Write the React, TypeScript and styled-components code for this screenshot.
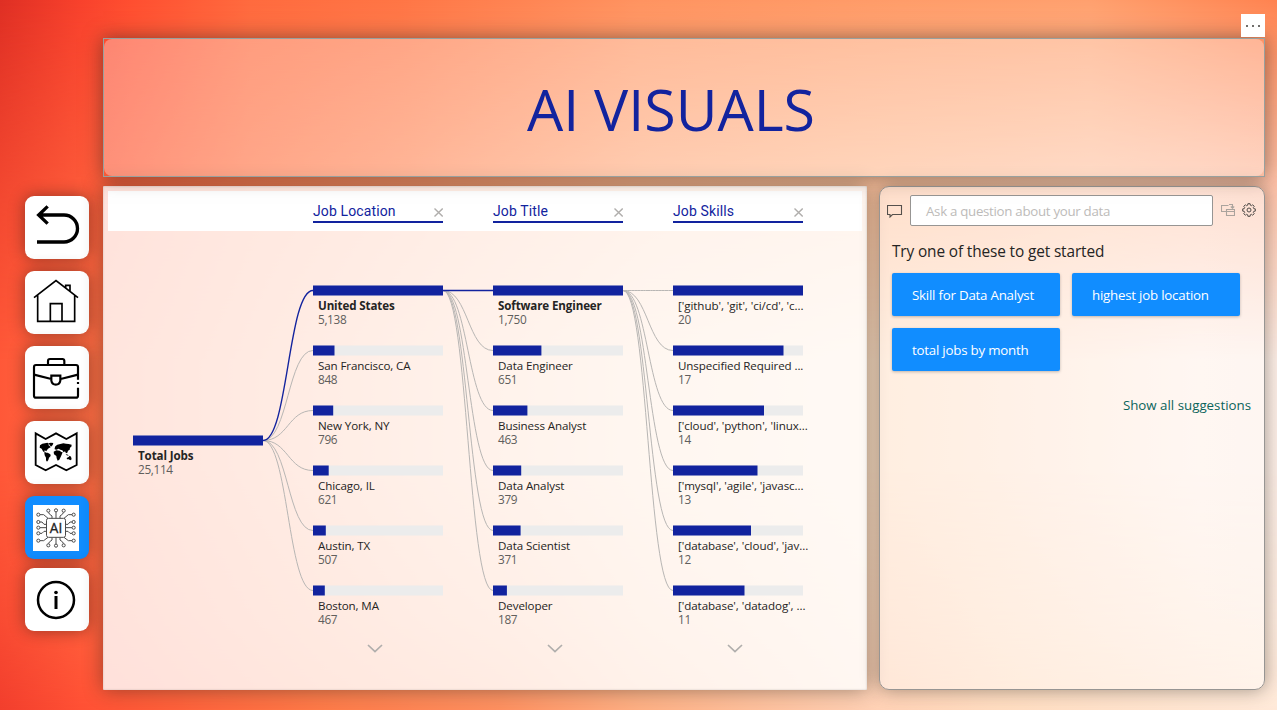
import React from "react";
import styled, { createGlobalStyle, css } from "styled-components";

const NAVY = "#12239e";
const UI = '"Open Sans", "Noto Sans", sans-serif';

const Global = createGlobalStyle`
  *, *::before, *::after { box-sizing: border-box; }
  body { margin: 0; font-family: ${UI}; color: #252423; }
  p, h1, h2 { margin: 0; font-weight: 400; }
  button { font: inherit; border: 0; padding: 0; cursor: pointer; }
  svg { display: block; flex-shrink: 0; }
`;

/* ---------- page ---------- */

const Page = styled.div`
  position: relative;
  isolation: isolate;
  display: flex;
  width: 1277px;
  height: 710px;
  overflow: hidden;
  background: linear-gradient(90deg, #ff5838 0, #ff6f45 100px, #ff9266 280px, #ffb28a 450px, #ffd0af 650px, #ffdfc4 860px, #ffe5d2 1000px, #fff0e8 1200px, #fdeee6 1277px);

  &::before, &::after {
    content: "";
    position: absolute;
    inset: 0;
    z-index: -1;
  }
  &::before {
    background: linear-gradient(90deg, #df2f24 0, #f8412c 80px, #ff4e30 130px, #ff6a3e 250px, #ff7545 400px, #ff9360 640px, #ff9c69 900px, #ffa06e 1090px, #ff8350 1277px);
    mask-image: linear-gradient(#000 0, rgba(0, 0, 0, 0.4) 190px, transparent 360px);
  }
  &::after {
    background: linear-gradient(90deg, #f23e2d 0, #ff5034 80px, #ff5c38 150px, #ff7a48 320px, #ff9060 500px, #ffb084 640px, #ffd0b4 870px, #ffdcc0 1000px, #ffe9d8 1277px);
    mask-image: linear-gradient(transparent 470px, rgba(0, 0, 0, 0.5) 620px, #000 710px);
  }
`;

const Sidebar = styled.nav`
  display: flex;
  flex-direction: column;
  gap: 12px;
  width: 103px;
  padding: 196px 0 0 25px;
`;

const NavButton = styled.button<{ $active?: boolean }>`
  display: flex;
  justify-content: center;
  align-items: center;
  width: 64px;
  height: 63px;
  border-radius: 9px;
  background: #fff;
  box-shadow: 0 0 16px rgba(30, 20, 15, 0.45);
  ${(p) =>
    p.$active &&
    css`
      justify-content: flex-start;
      padding-left: 8px;
      background: #118dff;
      margin-bottom: -3px;
    `}
`;

const Main = styled.main`
  display: flex;
  flex-direction: column;
  gap: 9px;
  width: 1162px;
  padding-top: 38px;
`;

const Banner = styled.header`
  position: relative;
  display: grid;
  place-items: center;
  height: 139px;
  padding-right: 26px;
  border: 1px solid #98a09e;
  box-shadow: 0 0 18px rgba(30, 30, 25, 0.5);
  &::before {
    content: "";
    position: absolute;
    inset: 0;
    border-radius: 8px;
    background: rgba(255, 255, 255, 0.32);
  }
`;

const Title = styled.h1`
  position: relative;
  padding-top: 2px;
  font-size: 57.3px;
  line-height: 78px;
  color: ${NAVY};
  white-space: nowrap;
`;

const MoreButton = styled.button`
  position: absolute;
  top: 14px;
  left: 1241px;
  display: flex;
  justify-content: center;
  align-items: center;
  gap: 4px;
  width: 24px;
  height: 23px;
  background: #fff;
`;

const Dot = styled.i`
  width: 2px;
  height: 2px;
  background: #706e6b;
`;

const Panels = styled.div`
  display: flex;
  gap: 12px;
  height: 504px;
`;

/* ---------- decomposition tree ---------- */

const TreePanel = styled.section`
  width: 764px;
  padding: 5px;
  border-radius: 1px;
  background: rgba(255, 255, 255, 0.82);
  box-shadow: 0 0 20px rgba(30, 30, 25, 0.45), inset 0 0 2px rgba(120, 120, 120, 0.4);
`;

const Levels = styled.div`
  display: flex;
  gap: 50px;
  height: 40px;
  padding: 12px 0 0 205px;
  background: #fff;
`;

const Level = styled.div`
  display: flex;
  justify-content: space-between;
  width: 130px;
  height: 20px;
  border-bottom: 2px solid ${NAVY};
  font: 14px/17px Roboto, sans-serif;
  letter-spacing: 0.12px;
  color: ${NAVY};
`;

const CloseIcon = styled.svg`
  width: 9px;
  height: 9px;
  margin-top: 5px;
`;

const Tree = styled.div`
  display: flex;
  height: 454px;
  padding-left: 25px;
`;

const Column = styled.div<{ $top: number }>`
  display: flex;
  flex-direction: column;
  width: 130px;
  padding-top: ${(p) => p.$top}px;
`;

const Node = styled.div`
  height: 60px;
`;

const NodeName = styled.p<{ $bold?: boolean; $list?: boolean }>`
  padding: 3px 0 0 5px;
  font-size: 11.6px;
  line-height: 14px;
  letter-spacing: ${(p) => (p.$list ? "-0.07px" : p.$bold ? "-0.13px" : "-0.11px")};
  white-space: nowrap;
  font-weight: ${(p) => (p.$bold ? 700 : 400)};
`;

const NodeValue = styled.p`
  margin-top: -1px;
  padding-left: 5px;
  font-size: 11.8px;
  line-height: 14px;
  letter-spacing: -0.35px;
  color: #605e5c;
`;

const Chevron = styled.svg`
  width: 16px;
  height: 9px;
  margin: -1px 0 0 54px;
`;

type Item = { name: string; value: string; fill: number; on?: boolean };

const locations: Item[] = [
  { name: "United States", value: "5,138", fill: 130, on: true },
  { name: "San Francisco, CA", value: "848", fill: 21.5 },
  { name: "New York, NY", value: "796", fill: 20.2 },
  { name: "Chicago, IL", value: "621", fill: 15.7 },
  { name: "Austin, TX", value: "507", fill: 12.8 },
  { name: "Boston, MA", value: "467", fill: 11.8 },
];
const titles: Item[] = [
  { name: "Software Engineer", value: "1,750", fill: 130, on: true },
  { name: "Data Engineer", value: "651", fill: 48.4 },
  { name: "Business Analyst", value: "463", fill: 34.4 },
  { name: "Data Analyst", value: "379", fill: 28.2 },
  { name: "Data Scientist", value: "371", fill: 27.6 },
  { name: "Developer", value: "187", fill: 13.9 },
];
const skills: Item[] = [
  { name: "['github', 'git', 'ci/cd', 'c...", value: "20", fill: 130 },
  { name: "Unspecified Required ...", value: "17", fill: 110.5 },
  { name: "['cloud', 'python', 'linux...", value: "14", fill: 91 },
  { name: "['mysql', 'agile', 'javasc...", value: "13", fill: 84.5 },
  { name: "['database', 'cloud', 'jav...", value: "12", fill: 78 },
  { name: "['database', 'datadog', ...", value: "11", fill: 71.5 },
];

const Bar = ({ fill }: { fill: number }) => (
  <svg width="130" height="11">
    <rect y="0.5" width="130" height="10" fill="#ececec" />
    <rect y="0.5" width={fill} height="10" fill={NAVY} />
  </svg>
);

const TreeNode = ({ item }: { item: Item }) => (
  <Node>
    <Bar fill={item.fill} />
    <NodeName $bold={item.on} $list={item.name.startsWith("[")}>
      {item.name}
    </NodeName>
    <NodeValue>{item.value}</NodeValue>
  </Node>
);

const NodeColumn = ({ items }: { items: Item[] }) => (
  <Column $top={54}>
    {items.map((it) => (
      <TreeNode key={it.name} item={it} />
    ))}
    <Chevron viewBox="0 0 16 9" fill="none" stroke="#b0aeac" strokeWidth="1.7">
      <path d="M1 1l7 6.6L15 1" />
    </Chevron>
  </Column>
);

/* curves run from the selected node on the left to the six nodes on the right */
const Links = ({ from, active }: { from: number; active?: boolean }) => (
  <svg width="50" height="454" fill="none">
    {[5, 4, 3, 2, 1, 0].map((i) => {
      const y = 59.5 + i * 60;
      const on = active && i === 0;
      return (
        <path
          key={i}
          d={`M0 ${from}C25 ${from} 25 ${y} 50 ${y}`}
          stroke={on ? NAVY : "#b8b6b4"}
          strokeWidth={on ? 1.4 : 1}
        />
      );
    })}
  </svg>
);

/* ---------- question panel ---------- */

const QnaPanel = styled.section`
  width: 386px;
  padding: 8px 8px 0 7px;
  border: 1px solid #979593;
  border-radius: 10px;
  background: rgba(255, 255, 255, 0.46);
  box-shadow: 0 0 18px rgba(30, 30, 25, 0.42);
`;

const AskRow = styled.div`
  display: flex;
  align-items: center;
  height: 31px;
`;

const AskInput = styled.div`
  flex-shrink: 0;
  width: 303px;
  height: 31px;
  margin: 0 8px 0 7px;
  padding: 0 15px;
  border: 1px solid #979593;
  border-radius: 2px;
  background: #fff;
  font-size: 13.3px;
  line-height: 31px;
  letter-spacing: -0.3px;
  color: #bdbbb9;
`;

const IconPair = styled.div`
  display: flex;
  gap: 7px;
  padding-bottom: 2px;
`;

const Prompt = styled.h2`
  margin: 15px 0 0 5px;
  font-size: 15.4px;
  line-height: 22px;
  letter-spacing: -0.13px;
`;

const Suggestions = styled.div`
  display: grid;
  grid-template-columns: 168px 168px;
  grid-auto-rows: 43px;
  gap: 12px;
  margin: 10px 0 0 5px;
`;

const Suggestion = styled.button`
  padding: 0 0 0 20px;
  border-radius: 2px;
  background: #118dff;
  box-shadow: 0 1px 3px rgba(0, 0, 0, 0.25);
  font-size: 13.3px;
  letter-spacing: -0.22px;
  color: #fff;
  text-align: left;
`;

const ShowAll = styled.p`
  margin: 24px 5px 0 0;
  font-size: 13.3px;
  line-height: 20px;
  color: #0b645b;
  text-align: right;
`;

/* ---------- icons ---------- */

const SpeechIcon = () => (
  <svg width="16" height="14" viewBox="0 0 16 14" fill="none" stroke="#55504c" strokeWidth="1.1">
    <path d="M.5 1.500h14v9H5.500L3 13v-2.500H.5z" />
  </svg>
);

const ConvertIcon = () => (
  <svg width="14" height="14" viewBox="0 0 14 14" fill="none" stroke="#aaa39d" strokeWidth="1.1">
    <path d="M5 8.500H.5v-6h7M5.500 6.500h8v6h-8zM5.500 8.500h8M8 1.500h3.500V5M9.800 3.500l1.700 1.700 1.700-1.700" />
  </svg>
);

const gearPath = (() => {
  const pts: string[] = [];
  for (let i = 0; i < 8; i++) {
    for (const [off, r] of [[-15, 5], [-10, 6.4], [10, 6.4], [15, 5]]) {
      const a = ((i * 45 + off) * Math.PI) / 180;
      pts.push(`${(7 + r * Math.cos(a)).toFixed(2)} ${(7 + r * Math.sin(a)).toFixed(2)}`);
    }
  }
  return `M${pts.join("L")}Z`;
})();

const GearIcon = () => (
  <svg width="14" height="14" viewBox="0 0 14 14" fill="none" stroke="#504c49" strokeWidth="1">
    <path d={gearPath} />
    <circle cx="7" cy="7" r="2" />
  </svg>
);

const NavIcon = styled.svg`
  width: 64px;
  height: 63px;
  fill: none;
  stroke: #000;
`;

const BackIcon = () => (
  <NavIcon viewBox="75 48 192 189" strokeWidth="10">
    <path d="M111 186h81a40.500 40.500 0 0 0 0-81h-74M143 79l-27 26 27 26" />
  </NavIcon>
);

const HomeIcon = () => (
  <NavIcon viewBox="75 273 192 189" strokeWidth="5">
    <path d="M102 353l66-51 66 51M113 346v78h111v-78M151 424v-53h35v53M197 323v-7h13v17" />
  </NavIcon>
);

const BriefcaseIcon = () => (
  <NavIcon viewBox="75 498 192 189" strokeWidth="6.500">
    <path d="M234 599v-38q0-6-6-6H108q-6 0-6 6v86q0 6 6 6h120q6 0 6-6v-24M234 606v6" />
    <path d="M144 555v-12q0-6 6-6h37q6 0 6 6v12M102 584l52 13M182 597l52-13M154 587h27v15q-2 12-13.500 12T154 602z" />
  </NavIcon>
);

const MapIcon = () => (
  <NavIcon viewBox="75 63 192 189" strokeWidth="5.500">
    <path d="M107 100l30 17 31-17 31 17 31-17v95l-31 16-31-16-31 16-30-16z" />
    <g fill="#000" stroke="none">
      <path d="M120 136l7-5 8-1 7-2 5 3-2 4 4 3 3 4-6 3-5 5-2 4-5-3-1 4 6 3 2 3-6-2-6-5-4-8-6-3z" />
      <path d="M146 130l6-2 8 1-2 6-5 5-4-5z" />
      <path d="M133 159l10-1 8 5 1 5-5 5-2 7-4 5-3-4 0-8-4-7z" />
      <path d="M161 155l8-4 10 1 5 4 4 1-3 7-3 7-4 8-5 3-3-7-1-7-7-5z" />
      <path d="M164 145l2-6 6-5 9-2 9-2 8 1 8 1 9 2-1 6-4 3-1 6-5 3-2 6-4 2-3-6-4 3-4-6-6-2-5-3-7 3-5-1z" />
      <path d="M200 174l6-3 3-4 4 3 2 8-4 3-5-3-5 0zM197 162l7 2 2 3-6-1z" />
    </g>
  </NavIcon>
);

const pins: [number, number, string][] = [
  [115, 344, "M120 344h11l13 11"],
  [115, 366, "M120 366h6l6 7h7"],
  [115, 383, "M120 383h19"],
  [115, 400, "M120 400h6l6-6h7"],
  [115, 422, "M120 422h11l13-10"],
  [145, 332, "M146 337l2 5 8 6v7"],
  [145, 436, "M146 431l2-5 8-6v-7"],
];

const Circuit = styled.svg`
  width: 46px;
  height: 46px;
  background: #fff;
`;

const AiIcon = () => (
  <Circuit viewBox="99 315 138 138" fill="none" stroke="#4a4a4a" strokeWidth="3">
    <rect x="139.500" y="355" width="57" height="57" rx="6" />
    {["", "translate(336 0) scale(-1 1)"].map((t) => (
      <g key={t} transform={t || undefined}>
        {pins.map(([x, y, d]) => (
          <g key={d}>
            <circle cx={x} cy={y} r="4.700" />
            <path d={d} />
          </g>
        ))}
      </g>
    ))}
    <circle cx="168" cy="331" r="4.700" />
    <circle cx="168" cy="437" r="4.700" />
    <path d="M168 336v19M168 432v-20" />
    <text x="168" y="398" textAnchor="middle" fontFamily="Open Sans" fontSize="42" fill="#222" stroke="#222" strokeWidth="1" textLength="37" lengthAdjust="spacingAndGlyphs">
      AI
    </text>
  </Circuit>
);

const InfoIcon = () => (
  <NavIcon viewBox="75 504 192 189" strokeWidth="7.500">
    <circle cx="168" cy="600" r="54" />
    <g fill="#000" stroke="none">
      <circle cx="168" cy="577.500" r="5.500" />
      <path d="M163.500 588h9v39h-9z" />
    </g>
  </NavIcon>
);

export default function App() {
  return (
    <Page>
      <Global />
      <Sidebar>
        <NavButton><BackIcon /></NavButton>
        <NavButton><HomeIcon /></NavButton>
        <NavButton><BriefcaseIcon /></NavButton>
        <NavButton><MapIcon /></NavButton>
        <NavButton $active><AiIcon /></NavButton>
        <NavButton><InfoIcon /></NavButton>
      </Sidebar>
      <Main>
        <Banner>
          <Title>AI VISUALS</Title>
        </Banner>
        <Panels>
          <TreePanel>
            <Levels>
              {["Job Location", "Job Title", "Job Skills"].map((l) => (
                <Level key={l}>
                  {l}
                  <CloseIcon viewBox="0 0 9 9" stroke="#b0aeac" strokeWidth="1.400">
                    <path d="M.5.5l8.200 8M8.700.5l-8.200 8" />
                  </CloseIcon>
                </Level>
              ))}
            </Levels>
            <Tree>
              <Column $top={204}>
                <TreeNode item={{ name: "Total Jobs", value: "25,114", fill: 130, on: true }} />
              </Column>
              <Links from={209.5} active />
              <NodeColumn items={locations} />
              <Links from={59.5} active />
              <NodeColumn items={titles} />
              <Links from={59.5} />
              <NodeColumn items={skills} />
            </Tree>
          </TreePanel>
          <QnaPanel>
            <AskRow>
              <SpeechIcon />
              <AskInput>Ask a question about your data</AskInput>
              <IconPair>
                <ConvertIcon />
                <GearIcon />
              </IconPair>
            </AskRow>
            <Prompt>Try one of these to get started</Prompt>
            <Suggestions>
              <Suggestion>Skill for Data Analyst</Suggestion>
              <Suggestion>highest job location</Suggestion>
              <Suggestion>total jobs by month</Suggestion>
            </Suggestions>
            <ShowAll>Show all suggestions</ShowAll>
          </QnaPanel>
        </Panels>
      </Main>
      <MoreButton>
        <Dot />
        <Dot />
        <Dot />
      </MoreButton>
    </Page>
  );
}
